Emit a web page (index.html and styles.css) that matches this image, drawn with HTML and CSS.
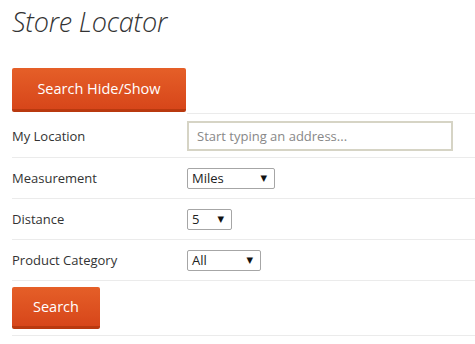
FILE: index.html
```html
<!DOCTYPE html>
<html lang="en">
<head>
    <meta charset="UTF-8">
    <meta name="viewport" content="width=device-width, initial-scale=1.0">
    <link rel="stylesheet" href="styles.css">
    <title>Store Locator</title>
</head>
<body>
    <h1 class="title">Store Locator</h1>

    <button class="btn btn-toggle">Search Hide/Show</button>

    <div class="form">
        <div class="row row-first">
            <div class="label">My Location</div>
            <div class="field">
                <input type="text" class="address" placeholder="Start typing an address...">
            </div>
        </div>
        <div class="row">
            <div class="label">Measurement</div>
            <div class="field">
                <span class="select select-miles">Miles</span>
            </div>
        </div>
        <div class="row">
            <div class="label">Distance</div>
            <div class="field">
                <span class="select select-dist">5</span>
            </div>
        </div>
        <div class="row">
            <div class="label">Product Category</div>
            <div class="field">
                <span class="select select-cat">All</span>
            </div>
        </div>
        <div class="row-submit">
            <button class="btn btn-search">Search</button>
        </div>
    </div>
</body>
</html>
```

FILE: styles.css
```css
body {
    font-family: 'Open Sans', sans-serif;
    margin: 0;
    padding: 0 0 0 12px;
    background-color: #fff;
    color: #333;
    width: 463px;
}

.title {
    margin: 0;
    padding-top: 3px;
    height: 65px;
    font-size: 27px;
    font-weight: 300;
    font-style: italic;
    color: #333;
    letter-spacing: -0.2px;
}

.btn {
    display: block;
    border: 0;
    border-bottom: 3px solid #b9390f;
    border-radius: 2px;
    background: linear-gradient(#e55f28, #d7461a);
    color: #fff;
    font-family: 'Open Sans', sans-serif;
    font-size: 14.5px;
    font-weight: 500;
    padding: 0;
    cursor: pointer;
}

.btn-toggle {
    width: 174px;
    height: 44px;
    margin-bottom: 1px;
}

.row {
    display: flex;
    align-items: center;
    height: 40px;
    border-top: 1px solid #ebebeb;
}

.row-first {
    height: 44px;
    border-top: 0;
}

.row-first .label,
.row-first .field {
    height: 44px;
    display: flex;
    align-items: center;
    border-top: 1px solid #ebebeb;
}

.row-first .label {
    border-top-color: transparent;
}

.row-first .field {
    flex: 1;
}

.label {
    width: 175px;
    font-size: 13px;
}

.address {
    width: 266px;
    height: 30px;
    box-sizing: border-box;
    border: 2px solid #d6d4c5;
    padding: 0 8px;
    font-family: 'Open Sans', sans-serif;
    font-size: 13px;
    color: #333;
    outline: none;
}

.address::placeholder {
    color: #888;
}

.select {
    display: flex;
    align-items: center;
    position: relative;
    box-sizing: border-box;
    height: 21px;
    border: 1px solid #a6a6a6;
    border-radius: 2px;
    padding-left: 4px;
    font-size: 13px;
    color: #222;
}

.select::after {
    content: "\25BC";
    position: absolute;
    right: 7px;
    top: 4px;
    font-family: 'DejaVu Sans', sans-serif;
    font-size: 8.5px;
    color: #111;
}

.select-miles {
    width: 88px;
}

.select-dist {
    width: 45px;
}

.select-cat {
    width: 74px;
}

.row-submit {
    border-top: 1px solid #ebebeb;
    border-bottom: 1px solid #ebebeb;
    padding: 6px 0 6px;
}

.btn-search {
    width: 88px;
    height: 42px;
}
```
